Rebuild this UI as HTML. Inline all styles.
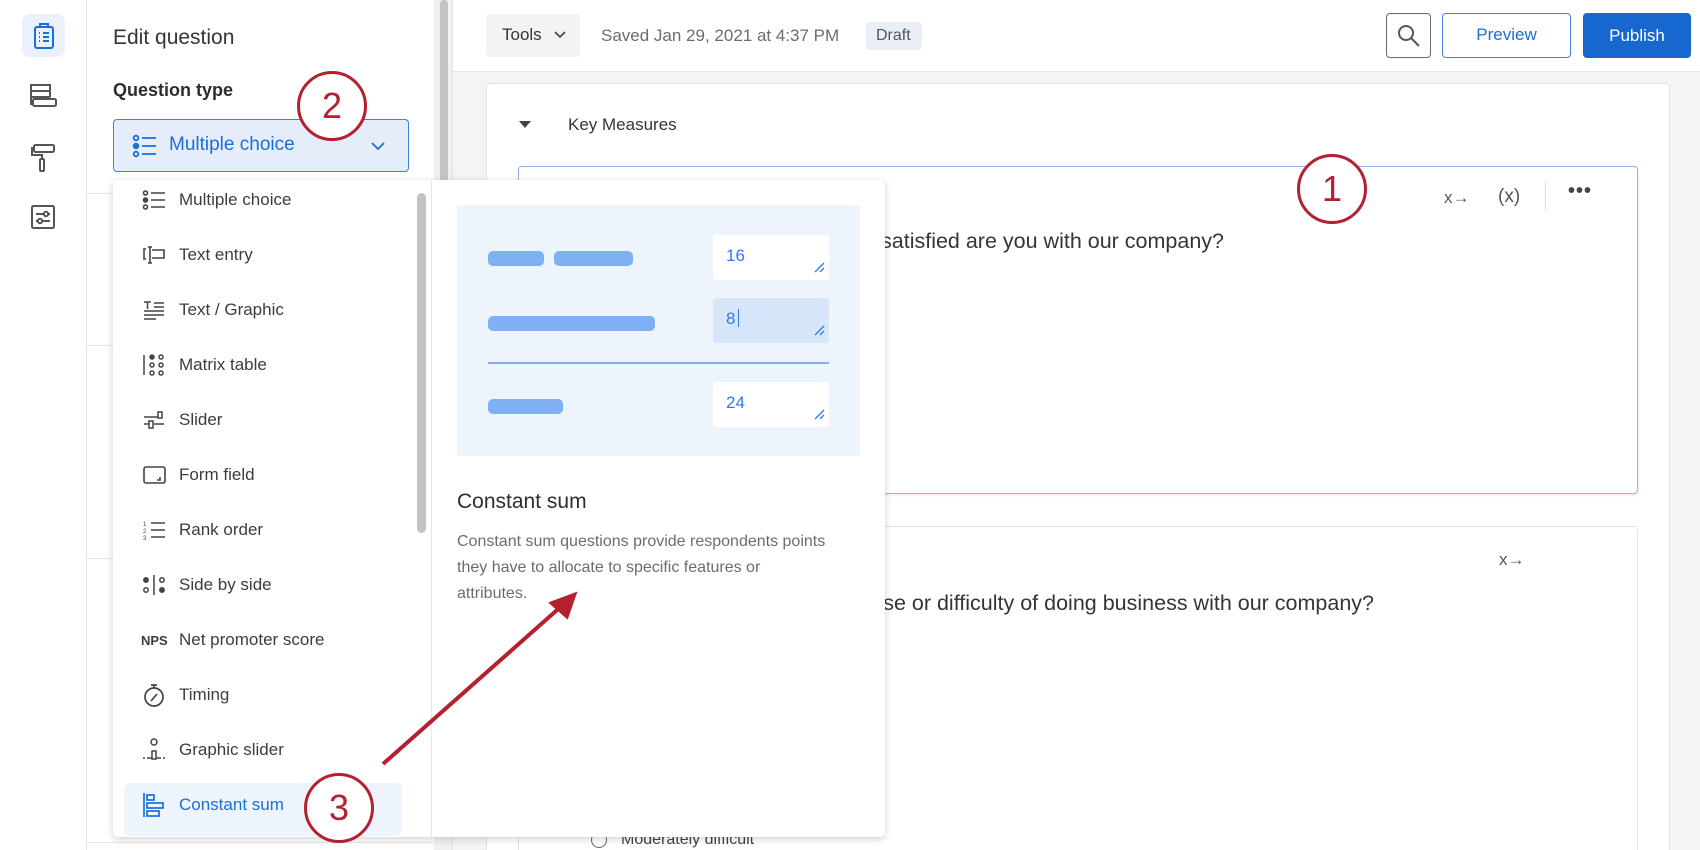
<!DOCTYPE html>
<html style="width:1700px;height:850px;overflow:hidden"><head><meta charset="utf-8">
<style>
*{box-sizing:border-box;margin:0;padding:0}
body{width:1700px;height:850px;overflow:hidden;background:#f4f4f4;font-family:"Liberation Sans",sans-serif;color:#32363a;position:relative}
.a{position:absolute}
.rail{left:0;top:0;width:87px;height:850px;background:#fff;border-right:1px solid #e4e4e4}
.panel{left:87px;top:0;width:347px;height:850px;background:#fff}
.sb{left:434px;top:0;width:19px;height:850px;background:#f0f0f0;border-right:1px solid #e0e0e0}
.top{left:453px;top:0;width:1247px;height:72px;background:#fff;border-bottom:1px solid #e6e6e6}
.card{background:#fff;border:1px solid #e2e2e2;border-radius:4px}
.item{position:absolute;left:0;width:299px;height:52px;font-size:17px;color:#3a3d40;display:flex;align-items:center}
.item svg{position:absolute;left:29px}
.item span{position:absolute;left:66px}
.circ{position:absolute;width:70px;height:70px;border:3.5px solid #b5202e;border-radius:50%;background:#fff;color:#b5202e;font-size:36px;display:flex;align-items:center;justify-content:center;font-family:"Liberation Sans",sans-serif}
.inp{position:absolute;left:713px;width:116px;height:45px;background:#fff;border-radius:3px;color:#2f7ae5;font-size:17px;padding:11px 0 0 13px}
.bar{position:absolute;height:15px;background:#7eb0f3;border-radius:5px}
</style></head><body>

<div class="a rail"></div>
<div class="a" style="left:22px;top:14px;width:43px;height:43px;background:#eaf1fc;border-radius:8px"></div>
<svg class="a" style="left:30px;top:22px" width="28" height="28" viewBox="0 0 28 28" fill="none" stroke="#1a6fd9" stroke-width="2"><rect x="5" y="5" width="18" height="21" rx="2"/><path d="M10 5V2h8v3"/><path d="M9 11h1M13 11h6M9 15h1M13 15h6M9 19h1M13 19h6"/></svg>
<svg class="a" style="left:28px;top:82px" width="30" height="28" viewBox="0 0 30 28" fill="none" stroke="#555" stroke-width="2"><path d="M22 9V3H3v19h3"/><rect x="3" y="9" width="19" height="6" rx="1"/><rect x="5" y="17" width="23" height="7" rx="1.5"/></svg>
<svg class="a" style="left:30px;top:143px" width="26" height="30" viewBox="0 0 26 30" fill="none" stroke="#555" stroke-width="2"><rect x="4" y="2" width="20" height="7" rx="1.5"/><path d="M4 5H2v7h10v4"/><rect x="10" y="16" width="4" height="12" rx="1"/></svg>
<svg class="a" style="left:29px;top:203px" width="28" height="28" viewBox="0 0 28 28" fill="none" stroke="#555" stroke-width="2"><rect x="3" y="3" width="22" height="22" rx="1.5"/><path d="M7 11h14M7 18h14"/><circle cx="17" cy="11" r="2.2" fill="#fff"/><circle cx="11" cy="18" r="2.2" fill="#fff"/></svg>

<div class="a panel"></div>
<div class="a" style="left:113px;top:26px;font-size:21px;color:#32363a">Edit question</div>
<div class="a" style="left:113px;top:80px;font-size:18px;font-weight:bold;color:#2b2e31">Question type</div>
<div class="a" style="left:87px;top:193px;width:347px;height:1px;background:#e6e6e6"></div>
<div class="a" style="left:87px;top:345px;width:347px;height:1px;background:#e6e6e6"></div>
<div class="a" style="left:87px;top:558px;width:347px;height:1px;background:#e6e6e6"></div>
<div class="a" style="left:87px;top:842px;width:347px;height:1px;background:#e6e6e6"></div>
<div class="a" style="left:113px;top:119px;width:296px;height:53px;background:#e4edf9;border:1.5px solid #3d82dc;border-radius:4px"></div>
<svg class="a" style="left:132px;top:134px" width="26" height="24" viewBox="0 0 26 24" fill="none" stroke="#1a6fd9" stroke-width="1.8"><circle cx="4" cy="4" r="2.3"/><circle cx="4" cy="12" r="2.3" fill="#1a6fd9"/><circle cx="4" cy="20" r="2.3"/><path d="M10 4h14M10 12h14M10 20h14"/></svg>
<div class="a" style="left:169px;top:134px;font-size:19px;color:#1a6fd9">Multiple choice</div>
<svg class="a" style="left:370px;top:140px" width="16" height="12" viewBox="0 0 16 12" fill="none" stroke="#1a6fd9" stroke-width="1.8"><path d="M2 3l6 6 6-6"/></svg>

<div class="a sb"></div>
<div class="a" style="left:440px;top:0;width:8px;height:590px;background:#c4c4c4;border-radius:4px"></div>

<div class="a top"></div>
<div class="a" style="left:486px;top:14px;width:94px;height:43px;background:#f3f3f3;border-radius:4px"></div>
<div class="a" style="left:502px;top:25px;font-size:17px;color:#32363a">Tools</div>
<svg class="a" style="left:553px;top:30px" width="14" height="10" viewBox="0 0 14 10" fill="none" stroke="#444" stroke-width="1.6"><path d="M2 2l5 5 5-5"/></svg>
<div class="a" style="left:601px;top:26px;font-size:17px;color:#6a6d70">Saved Jan 29, 2021 at 4:37 PM</div>
<div class="a" style="left:866px;top:22px;width:56px;height:28px;background:#eaeff7;border-radius:4px;font-size:16px;color:#555;padding:5px 0 0 10px">Draft</div>
<div class="a" style="left:1386px;top:13px;width:45px;height:45px;border:1.5px solid #6a6a6a;border-radius:4px"></div>
<svg class="a" style="left:1396px;top:23px" width="26" height="26" viewBox="0 0 26 26" fill="none" stroke="#555" stroke-width="2"><circle cx="10" cy="10" r="7"/><path d="M15 15l8 8"/></svg>
<div class="a" style="left:1442px;top:13px;width:129px;height:45px;border:1.5px solid #3d82dc;border-radius:4px;color:#1a6fd9;font-size:17px;text-align:center;line-height:42px">Preview</div>
<div class="a" style="left:1583px;top:13px;width:108px;height:45px;background:#1767d0;border-radius:4px;color:#fff;font-size:17px;text-align:center;line-height:45px">Publish</div>

<div class="a card" style="left:486px;top:83px;width:1184px;height:780px"></div>
<svg class="a" style="left:519px;top:121px" width="12" height="8"><path d="M0 0h12L6 7z" fill="#444"/></svg>
<div class="a" style="left:568px;top:115px;font-size:17px;color:#32363a">Key Measures</div>

<div class="a card" style="left:518px;top:166px;width:1120px;height:328px;border:1.5px solid #8fb7ea;box-shadow:0 1px 3px rgba(0,0,0,.1)"></div>
<div class="a" style="left:560px;top:229px;width:664px;text-align:right;font-size:21.5px;color:#32363a;white-space:nowrap">Overall, how satisfied are you with our company?</div>
<div class="a" style="left:1444px;top:188px;font-size:17px;color:#555">x→</div>
<div class="a" style="left:1498px;top:186px;font-size:19px;color:#555">(x)</div>
<div class="a" style="left:1545px;top:181px;width:1px;height:30px;background:#ddd"></div>
<div class="a" style="left:1568px;top:180px;font-size:20px;color:#444;letter-spacing:1px;font-weight:bold">•••</div>

<div class="a card" style="left:518px;top:526px;width:1120px;height:340px"></div>
<div class="a" style="left:500px;top:591px;width:874px;text-align:right;font-size:21.5px;color:#32363a;white-space:nowrap">How would you rate the ease or difficulty of doing business with our company?</div>
<div class="a" style="left:1499px;top:550px;font-size:17px;color:#555">x→</div>
<div class="a" style="left:591px;top:832px;width:16px;height:16px;border:1.5px solid #666;border-radius:50%"></div>
<div class="a" style="left:621px;top:831px;font-size:16px;color:#444">Moderately difficult</div>

<div class="a" style="left:113px;top:180px;width:772px;height:657px;background:#fff;border-radius:5px;box-shadow:0 2px 8px rgba(0,0,0,.18)"></div>
<div class="a" style="left:431px;top:180px;width:1px;height:657px;background:#e6e6e6"></div>
<div class="a" style="left:417px;top:193px;width:9px;height:340px;background:#c2c2c2;border-radius:5px"></div>
<div class="a" style="left:124px;top:783px;width:278px;height:53px;background:#eef4fc;border-radius:6px"></div>

<div class="a" style="left:113px;top:174px;width:300px;height:660px">
<div class="item" style="top:0"><svg width="24" height="22" viewBox="0 0 24 22" fill="none" stroke="#444" stroke-width="1.6"><circle cx="3.5" cy="4" r="2"/><circle cx="3.5" cy="11" r="2" fill="#444"/><circle cx="3.5" cy="18" r="2"/><path d="M9 4h14M9 11h14M9 18h14"/></svg><span>Multiple choice</span></div>
<div class="item" style="top:55px"><svg width="24" height="22" viewBox="0 0 24 22" fill="none" stroke="#444" stroke-width="1.6"><path d="M4 5h-2v10h2M6 3h4M8 3v16M6 19h4M10 6h12v8H10"/></svg><span>Text entry</span></div>
<div class="item" style="top:110px"><svg width="24" height="22" viewBox="0 0 24 22" fill="none" stroke="#444" stroke-width="1.5"><path d="M2 3h7M5.5 3v7M12 4h10M12 8h10M2 12h20M2 16h20M2 20h12"/></svg><span>Text / Graphic</span></div>
<div class="item" style="top:165px"><svg width="24" height="24" viewBox="0 0 24 24" fill="none" stroke="#444" stroke-width="1.5"><path d="M2 2v20"/><circle cx="10" cy="4" r="2" fill="#444"/><circle cx="10" cy="12" r="2"/><circle cx="10" cy="20" r="2"/><circle cx="19" cy="4" r="2"/><circle cx="19" cy="12" r="2"/><circle cx="19" cy="20" r="2"/></svg><span>Matrix table</span></div>
<div class="item" style="top:220px"><svg width="24" height="22" viewBox="0 0 24 22" fill="none" stroke="#444" stroke-width="1.5"><path d="M2 8h14M2 15h5M12 15h10"/><rect x="16" y="3" width="4" height="6"/><rect x="7" y="12" width="4" height="7"/></svg><span>Slider</span></div>
<div class="item" style="top:275px"><svg width="24" height="22" viewBox="0 0 24 22" fill="none" stroke="#444" stroke-width="1.6"><rect x="2" y="3" width="21" height="16" rx="2"/><path d="M18 13v3h-3"/></svg><span>Form field</span></div>
<div class="item" style="top:330px"><svg width="24" height="22" viewBox="0 0 24 22" fill="none" stroke="#444" stroke-width="1.6"><path d="M9 4h14M9 11h14M9 18h14"/><text x="1" y="7" font-size="6" fill="#444" stroke="none">1</text><text x="1" y="14" font-size="6" fill="#444" stroke="none">2</text><text x="1" y="21" font-size="6" fill="#444" stroke="none">3</text></svg><span>Rank order</span></div>
<div class="item" style="top:385px"><svg width="24" height="24" viewBox="0 0 24 24" fill="none" stroke="#444" stroke-width="1.5"><circle cx="4" cy="7" r="2.2" fill="#444"/><circle cx="4" cy="17" r="2.2"/><path d="M12 2v20"/><circle cx="20" cy="7" r="2.2"/><circle cx="20" cy="17" r="2.2" fill="#444"/></svg><span>Side by side</span></div>
<div class="item" style="top:440px"><div style="position:absolute;left:28px;font-size:13px;font-weight:bold;color:#3a3d40">NPS</div><span>Net promoter score</span></div>
<div class="item" style="top:495px"><svg width="24" height="26" viewBox="0 0 24 26" fill="none" stroke="#444" stroke-width="1.7"><circle cx="12" cy="15" r="9"/><path d="M9 3h6M12 3v3M9 19l6-7"/></svg><span>Timing</span></div>
<div class="item" style="top:550px"><svg width="24" height="26" viewBox="0 0 24 26" fill="none" stroke="#444" stroke-width="1.5"><circle cx="12" cy="5" r="3"/><rect x="10" y="14" width="4" height="8"/><path d="M1 21h2M5 21h2M17 21h2M21 21h2M7 21h3M14 21h3"/></svg><span>Graphic slider</span></div>
<div class="item" style="top:605px;color:#1a6fd9"><svg width="24" height="26" viewBox="0 0 24 26" fill="none" stroke="#1a6fd9" stroke-width="1.7"><path d="M2 1v24"/><rect x="5" y="3" width="7" height="5"/><rect x="5" y="11" width="16" height="5"/><rect x="5" y="19" width="12" height="5"/></svg><span>Constant sum</span></div>
</div>

<div class="a" style="left:457px;top:205px;width:403px;height:251px;background:#eef4fc"></div>
<div class="bar" style="left:488px;top:251px;width:56px"></div>
<div class="bar" style="left:554px;top:251px;width:79px"></div>
<div class="inp" style="top:235px">16</div>
<div class="bar" style="left:488px;top:316px;width:167px"></div>
<div class="inp" style="top:298px;background:#d7e5fa">8<span style="display:inline-block;width:1px;height:18px;background:#2f7ae5;vertical-align:-3px;margin-left:3px"></span></div>
<div class="a" style="left:488px;top:362px;width:341px;height:1.5px;background:#7eb0f3"></div>
<div class="bar" style="left:488px;top:399px;width:75px"></div>
<div class="inp" style="top:382px">24</div>
<svg class="a" style="left:812px;top:260px" width="14" height="14"><path d="M3 12L12 3M8 12l4-4" stroke="#2f7ae5" stroke-width="1.3"/></svg>
<svg class="a" style="left:812px;top:323px" width="14" height="14"><path d="M3 12L12 3M8 12l4-4" stroke="#2f7ae5" stroke-width="1.3"/></svg>
<svg class="a" style="left:812px;top:407px" width="14" height="14"><path d="M3 12L12 3M8 12l4-4" stroke="#2f7ae5" stroke-width="1.3"/></svg>

<div class="a" style="left:457px;top:490px;font-size:21px;color:#2b2e31">Constant sum</div>
<div class="a" style="left:457px;top:529px;width:420px;font-size:16px;line-height:26px;color:#6a6d70;white-space:nowrap">Constant sum questions provide respondents points<br>they have to allocate to specific features or<br>attributes.</div>

<div class="circ" style="left:297px;top:71px">2</div>
<div class="circ" style="left:1297px;top:154px">1</div>
<svg class="a" style="left:0;top:0" width="1700" height="850"><path d="M383 764L565 603" stroke="#b5202e" stroke-width="4" fill="none"/><path d="M575 594L551 603L567 617Z" fill="#b5202e" stroke="#b5202e" stroke-width="3"/></svg>
<div class="circ" style="left:304px;top:773px">3</div>
</body></html>
